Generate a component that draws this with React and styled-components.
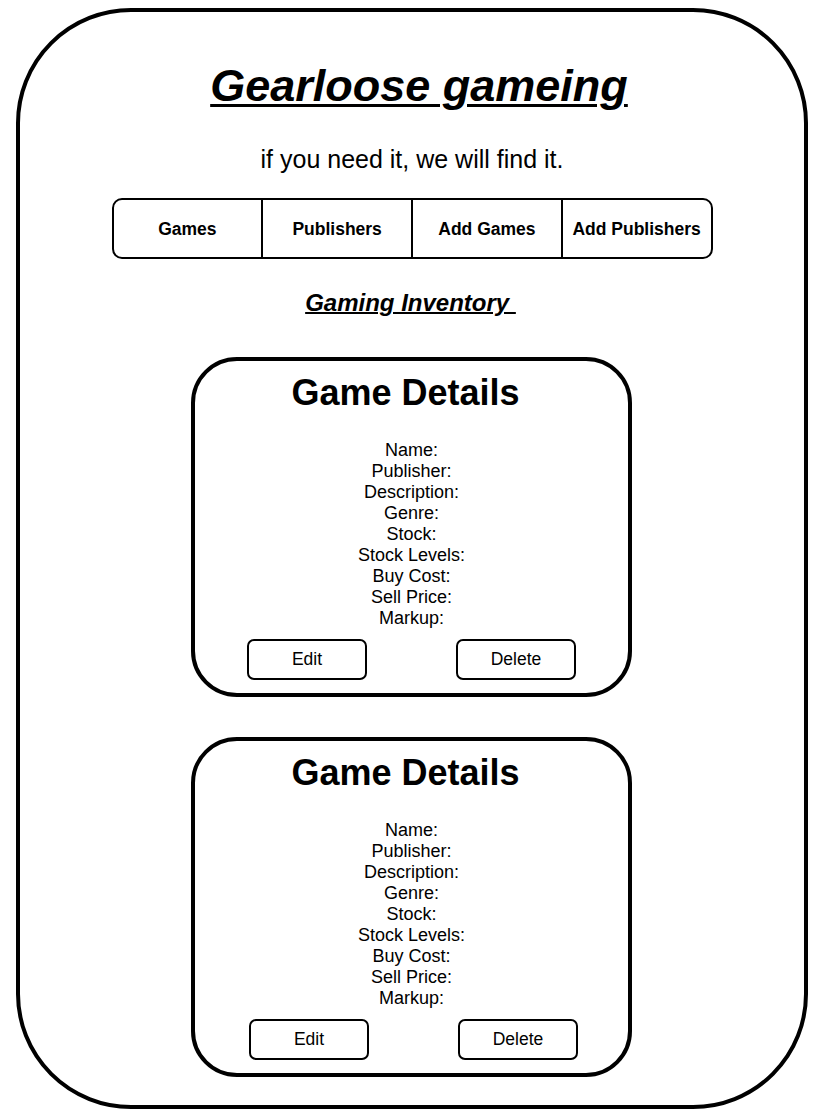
import styled, { createGlobalStyle } from "styled-components";

const GlobalStyle = createGlobalStyle`
  body {
    margin: 0;
    background: #fff;
    font-family: "Liberation Sans", Arial, Helvetica, sans-serif;
    color: #000;
  }
`;

const navItems = ["Games", "Publishers", "Add Games", "Add Publishers"];

const fields = [
  "Name:",
  "Publisher:",
  "Description:",
  "Genre:",
  "Stock:",
  "Stock Levels:",
  "Buy Cost:",
  "Sell Price:",
  "Markup:",
];

const GameCard = ({ shift = 0 }) => (
  <Card>
    <CardTitle>Game Details</CardTitle>
    <FieldList>
      {fields.map((f) => (
        <Field key={f}>{f}</Field>
      ))}
    </FieldList>
    <ButtonRow $shift={shift}>
      <ActionButton type="button">Edit</ActionButton>
      <ActionButton type="button">Delete</ActionButton>
    </ButtonRow>
  </Card>
);

const App = () => {
  return (
    <>
      <GlobalStyle />
      <Frame>
        <Title>Gearloose gameing</Title>
        <Tagline>if you need it, we will find it.</Tagline>
        <Nav>
          {navItems.map((item) => (
            <NavItem key={item}>{item}</NavItem>
          ))}
        </Nav>
        <SectionTitle>Gaming Inventory&nbsp;</SectionTitle>
        <CardStack>
          <GameCard />
          <GameCard shift={2} />
        </CardStack>
      </Frame>
    </>
  );
};

export default App;

const Frame = styled.div`
  box-sizing: border-box;
  width: 792px;
  height: 1101px;
  margin: 8px 0 0 16px;
  border: 4px solid #000;
  border-radius: 115px;
  display: flex;
  flex-direction: column;
  align-items: center;
`;

const Title = styled.h1`
  margin: 48px 0 0;
  padding-left: 14px;
  font-size: 45px;
  line-height: 52px;
  font-weight: 700;
  font-style: italic;
  text-decoration: underline;
  text-decoration-thickness: 3px;
  text-underline-offset: 3px;
`;

const Tagline = styled.p`
  margin: 33px 0 0;
  font-size: 25px;
  line-height: 28px;
`;

const Nav = styled.nav`
  box-sizing: border-box;
  display: flex;
  width: 601px;
  height: 61px;
  margin-top: 25px;
  border: 2px solid #000;
  border-radius: 10px;
`;

const NavItem = styled.div`
  flex: 1;
  display: flex;
  align-items: center;
  justify-content: center;
  padding-top: 2px;
  font-size: 17.5px;
  font-weight: 700;

  & + & {
    border-left: 2px solid #000;
  }
`;

const SectionTitle = styled.h2`
  margin: 30px 3px 0 0;
  font-size: 24px;
  line-height: 28px;
  font-weight: 700;
  font-style: italic;
  text-decoration: underline;
  text-decoration-thickness: 2px;
`;

const CardStack = styled.div`
  display: flex;
  flex-direction: column;
  gap: 40px;
  margin-top: 40px;
  margin-right: 1px;
`;

const Card = styled.section`
  box-sizing: border-box;
  width: 441px;
  height: 340px;
  padding: 11px 0 13px;
  border: 4px solid #000;
  border-radius: 46px;
  display: flex;
  flex-direction: column;
  align-items: center;
`;

const CardTitle = styled.h3`
  margin: 0;
  padding-right: 12px;
  font-size: 36px;
  line-height: 42px;
  font-weight: 700;
`;

const FieldList = styled.div`
  margin-top: 26px;
  display: flex;
  flex-direction: column;
  align-items: center;
`;

const Field = styled.div`
  font-size: 18px;
  line-height: 21px;
`;

const ButtonRow = styled.div`
  box-sizing: border-box;
  width: 100%;
  margin-top: 10px;
  padding: 0 ${(p) => 52 - p.$shift}px 0 ${(p) => 52 + p.$shift}px;
  display: flex;
  justify-content: space-between;
`;

const ActionButton = styled.button`
  box-sizing: border-box;
  width: 120px;
  height: 41px;
  border: 2px solid #000;
  border-radius: 7px;
  background: #fff;
  color: #000;
  font-family: inherit;
  font-size: 17.5px;
  padding: 0;
  cursor: pointer;
`;
